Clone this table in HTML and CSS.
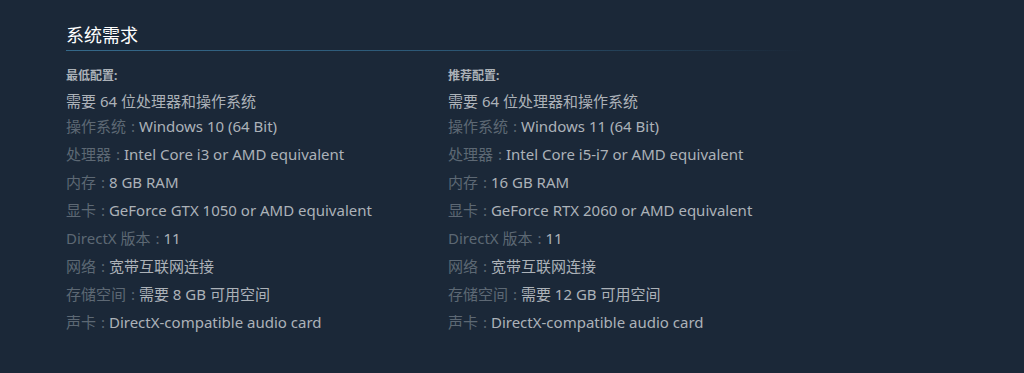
FILE: index.html
```html
<!DOCTYPE html>
<html lang="zh-CN">
<head>
<meta charset="utf-8">
<title>系统需求</title>
<link rel="stylesheet" href="styles.css">
</head>
<body>
<div class="page">
  <h2 class="title">系统需求</h2>
  <div class="cols">
    <div class="col">
      <div class="col-head">最低配置:</div>
      <ul class="reqs">
        <li>需要 64 位处理器和操作系统</li>
        <li><span class="k">操作系统<span class="c">:</span></span> Windows 10 (64 Bit)</li>
        <li><span class="k">处理器<span class="c">:</span></span> Intel Core i3 or AMD equivalent</li>
        <li><span class="k">内存<span class="c">:</span></span> 8 GB RAM</li>
        <li><span class="k">显卡<span class="c">:</span></span> GeForce GTX 1050 or AMD equivalent</li>
        <li><span class="k">DirectX 版本<span class="c">:</span></span> 11</li>
        <li><span class="k">网络<span class="c">:</span></span> 宽带互联网连接</li>
        <li><span class="k">存储空间<span class="c">:</span></span> 需要 8 GB 可用空间</li>
        <li><span class="k">声卡<span class="c">:</span></span> DirectX-compatible audio card</li>
      </ul>
    </div>
    <div class="col">
      <div class="col-head">推荐配置:</div>
      <ul class="reqs">
        <li>需要 64 位处理器和操作系统</li>
        <li><span class="k">操作系统<span class="c">:</span></span> Windows 11 (64 Bit)</li>
        <li><span class="k">处理器<span class="c">:</span></span> Intel Core i5-i7 or AMD equivalent</li>
        <li><span class="k">内存<span class="c">:</span></span> 16 GB RAM</li>
        <li><span class="k">显卡<span class="c">:</span></span> GeForce RTX 2060 or AMD equivalent</li>
        <li><span class="k">DirectX 版本<span class="c">:</span></span> 11</li>
        <li><span class="k">网络<span class="c">:</span></span> 宽带互联网连接</li>
        <li><span class="k">存储空间<span class="c">:</span></span> 需要 12 GB 可用空间</li>
        <li><span class="k">声卡<span class="c">:</span></span> DirectX-compatible audio card</li>
      </ul>
    </div>
  </div>
</div>
</body>
</html>
```

FILE: styles.css
```css
html, body {
  margin: 0;
  padding: 0;
  background: #1b2838;
  height: 100%;
}
body {
  font-family: "Noto Sans", "Noto Sans CJK SC", sans-serif;
  color: #acb2b8;
}
.page {
  width: 764px;
  padding: 23px 0 0 66px;
}
.title {
  margin: 0;
  font-size: 18px;
  font-weight: normal;
  color: #ffffff;
  line-height: 24px;
  padding-bottom: 3px;
}
.title::after {
  content: "";
  display: block;
  height: 1px;
  margin-top: 3px;
  background: linear-gradient(to right, #35698a 0%, #2c5876 50%, rgba(44, 88, 118, 0) 100%);
  width: 740px;
}
.cols {
  display: flex;
  margin-top: 14px;
}
.col {
  width: 382px;
}
.col-head {
  font-size: 12px;
  font-weight: bold;
  line-height: 16px;
  color: #acb2b8;
}
.reqs {
  list-style: none;
  margin: 0;
  padding: 0;
  font-size: 15px;
  line-height: 20px;
}
.reqs li {
  margin-top: 8px;
}
.reqs li:first-child {
  margin-top: 7px;
}
.reqs li:nth-child(2) {
  margin-top: 5px;
}
.k {
  color: #5d6874;
}
.c {
  margin-left: 5px;
}
```
